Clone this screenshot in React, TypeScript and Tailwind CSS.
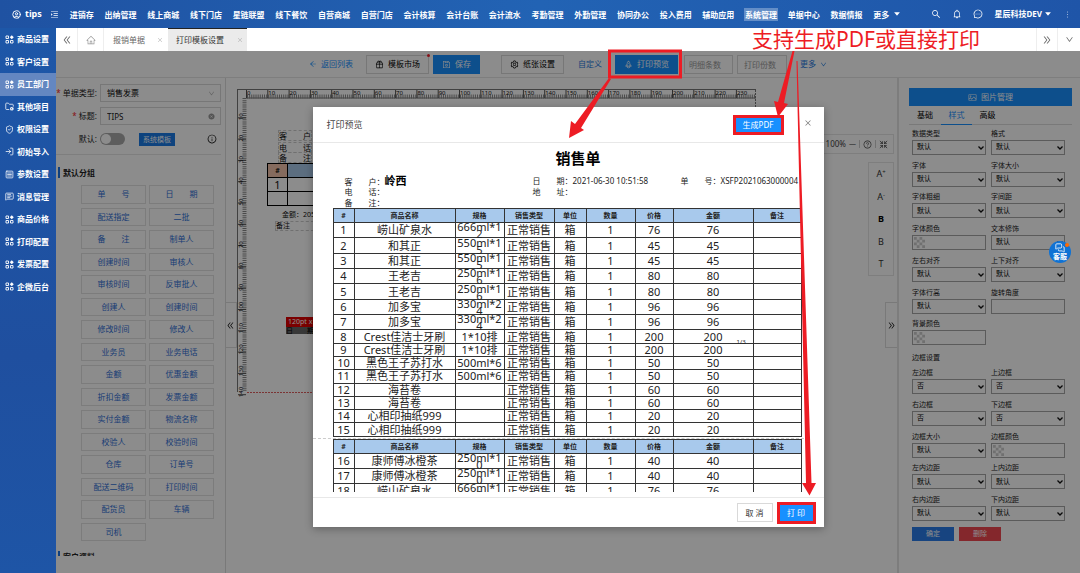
import type { ReactNode } from 'react'
import {
  AiFillCaretDown,
  AiFillCloseCircle,
  AiOutlineArrowLeft,
  AiOutlineBell,
  AiOutlineClose,
  AiOutlineDoubleLeft,
  AiOutlineDoubleRight,
  AiOutlineDown,
  AiOutlineGift,
  AiOutlineHome,
  AiOutlineInfoCircle,
  AiOutlineMenuUnfold,
  AiOutlineMessage,
  AiOutlineMore,
  AiOutlinePicture,
  AiOutlineQuestionCircle,
  AiOutlineRocket,
  AiOutlineSave,
  AiOutlineSearch,
  AiOutlineSetting,
} from 'react-icons/ai'
import { CircleUser, FolderCog, LogIn, MessageSquareText, MessagesSquare, ShieldCheck, Shrink, SquareMenu } from 'lucide-react'

const NAV = [
  '进销存', '出纳管理', '线上商城', '线下门店', '星链联盟', '线下餐饮', '自营商城', '自营门店', '会计核算', '会计台账',
  '会计流水', '考勤管理', '外勤管理', '协同办公', '投入费用', '辅助应用', '系统管理', '单据中心', '数据情报',
]

// three tiles with a diamond in the top right corner
const grid = (
  <svg viewBox="0 0 18 18" className="size-[9px]" fill="none" stroke="currentColor" strokeWidth="1.8">
    <path d="M2 2h5v5H2zM2 11h5v5H2zM11 11h5v5h-5z" />
    <path d="M13.500 .5 17.500 4.500 13.500 8.500 9.500 4.500Z" fill="currentColor" stroke="none" />
  </svg>
)

const SIDEBAR: { label: string; icon: ReactNode }[] = [
  { label: '商品设置', icon: grid },
  { label: '客户设置', icon: grid },
  { label: '员工部门', icon: grid },
  { label: '其他项目', icon: <FolderCog className="size-[9px]" /> },
  { label: '权限设置', icon: <ShieldCheck className="size-[9px]" /> },
  { label: '初始导入', icon: <LogIn className="size-[9px]" /> },
  { label: '参数设置', icon: <SquareMenu className="size-[9px]" /> },
  { label: '消息管理', icon: <MessageSquareText className="size-[9px]" /> },
  { label: '商品价格', icon: grid },
  { label: '打印配置', icon: grid },
  { label: '发票配置', icon: grid },
  { label: '企微后台', icon: grid },
]

const FIELDS = [
  '单　　号', '日　　期', '配送指定', '二批', '备　　注', '制单人', '创建时间', '审核人', '审核时间', '反审批人',
  '创建人', '创建时间', '修改时间', '修改人', '业务员', '业务电话', '金额', '优惠金额', '折扣金额', '发票金额',
  '实付金额', '物流名称', '校验人', '校验时间', '仓库', '订单号', '配送二维码', '打印时间', '配货员', '车辆', '司机',
]

type Prop = { label: string; kind: 'select' | 'color' | 'text'; value?: string }

const STYLE_PROPS: Prop[] = [
  { label: '数据类型', kind: 'select' },
  { label: '格式', kind: 'select' },
  { label: '字体', kind: 'select' },
  { label: '字体大小', kind: 'select' },
  { label: '字体粗细', kind: 'select' },
  { label: '字间距', kind: 'select' },
  { label: '字体颜色', kind: 'color' },
  { label: '文本修饰', kind: 'select' },
  { label: '左右对齐', kind: 'select' },
  { label: '上下对齐', kind: 'select' },
  { label: '字体行高', kind: 'select' },
  { label: '旋转角度', kind: 'text' },
  { label: '背景颜色', kind: 'color' },
]

const BORDER_PROPS: Prop[] = [
  { label: '左边框', kind: 'select', value: '否' },
  { label: '上边框', kind: 'select', value: '否' },
  { label: '右边框', kind: 'select', value: '否' },
  { label: '下边框', kind: 'select', value: '否' },
  { label: '边框大小', kind: 'select' },
  { label: '边框颜色', kind: 'color' },
  { label: '左内边距', kind: 'select' },
  { label: '上内边距', kind: 'select' },
  { label: '右内边距', kind: 'select' },
  { label: '下内边距', kind: 'select' },
]

type Item = [name: string, spec: string, price: number]

const PAGE_ONE: Item[] = [
  ['崂山矿泉水', '666ml*12', 76],
  ['和其正', '550ml*15', 45],
  ['和其正', '550ml*15', 45],
  ['王老吉', '250ml*16', 80],
  ['王老吉', '250ml*16', 80],
  ['加多宝', '330ml*24', 96],
  ['加多宝', '330ml*24', 96],
  ['Crest佳洁士牙刷', '1*10排', 200],
  ['Crest佳洁士牙刷', '1*10排', 200],
  ['黑色王子苏打水', '500ml*6', 50],
  ['黑色王子苏打水', '500ml*6', 50],
  ['海苔卷', '', 60],
  ['海苔卷', '', 60],
  ['心相印抽纸999', '', 20],
  ['心相印抽纸999', '', 20],
]

const PAGE_TWO: Item[] = [
  ['康师傅冰橙茶', '250ml*10', 40],
  ['康师傅冰橙茶', '250ml*10', 40],
  ['崂山矿泉水', '666ml*12', 76],
]

function Header() {
  return (
    <header className="flex h-7 shrink-0 items-center bg-linear-to-r from-[#1f52a2] via-[#2263b4] to-[#1f55a8] pr-2 pl-3 text-[8px] font-bold text-white">
      <CircleUser className="mr-1 size-[9px]" strokeWidth={2.5} />
      <span className="mr-2 text-[9px]">tips</span>
      <AiOutlineMenuUnfold className="mr-[11px] size-[9px]" />
      <nav className="flex flex-1 items-center justify-between leading-[11px]">
        {NAV.map((n) => (
          <a key={n} href="#" className={n === '系统管理' ? 'bg-white/30 outline outline-white/30' : ''}>
            {n}
          </a>
        ))}
        <a href="#" className="flex items-center gap-1">
          更多 <AiFillCaretDown className="size-2" />
        </a>
      </nav>
      <div className="ml-[30px] flex items-center gap-[11px]">
        <AiOutlineSearch className="size-[10px]" />
        <AiOutlineBell className="size-[10px]" />
        <AiOutlineMessage className="size-[10px]" />
        <button className="flex items-center gap-0.5">
          星辰科技DEV <AiFillCaretDown className="size-2" />
        </button>
        <AiOutlineMore className="size-[9px]" />
      </div>
    </header>
  )
}

function Sidebar() {
  return (
    <aside className="w-14 shrink-0 bg-linear-to-b from-[#1d57a8] via-[#1f4f9f] via-60% to-[#1e55a6] text-[8px] font-bold text-white">
      <nav className="grid h-[270px] auto-rows-fr">
        {SIDEBAR.map((s) => (
          <a key={s.label} href="#" className={s.label === '员工部门' ? 'flex items-center gap-[3px] bg-[#6487c1] pl-[5px]' : 'flex items-center gap-[3px] pl-[5px]'}>
            {s.icon}
            {s.label}
          </a>
        ))}
      </nav>
    </aside>
  )
}

function TabBar() {
  return (
    <div className="flex h-[23px] shrink-0 bg-white text-[8px] text-[#666]">
      <button aria-label="向左" className="flex w-[22px] items-center justify-center border-r border-[#eee]">
        <AiOutlineDoubleLeft className="size-[10px]" />
      </button>
      <button aria-label="首页" className="flex w-[26px] items-center justify-center border-r border-[#eee] text-[#999]">
        <AiOutlineHome className="size-[10px]" />
      </button>
      <button className="flex w-16 items-center justify-between pr-[5px] pl-[9px]">
        报销单据 <AiOutlineClose className="size-[6px] text-[#aaa]" />
      </button>
      <button className="flex w-[79px] items-center justify-between border-t border-[#222] bg-[#ebebeb] pr-1 pl-2 text-[#333]">
        打印模板设置 <AiOutlineClose className="size-[6px] text-[#aaa]" />
      </button>
      <div className="flex-1" />
      <button aria-label="向右" className="flex w-[22px] items-center justify-center border-x border-[#eee]">
        <AiOutlineDoubleRight className="size-[10px]" />
      </button>
      <button aria-label="标签列表" className="flex w-[22px] items-center justify-center">
        <AiOutlineDown className="size-[9px]" />
      </button>
    </div>
  )
}

function Toolbar() {
  return (
    <div className="flex h-[27px] shrink-0 items-center justify-center border-b border-[#e6e6e6] text-[8px] text-[#222]">
      <a href="#" className="mr-[13px] flex items-center gap-1 text-[#1890ff]">
        <AiOutlineArrowLeft className="size-2" /> 返回列表
      </a>
      <button className="relative mr-1 flex h-[19px] items-center gap-1 border border-[#d9d9d9] px-2 text-black">
        <AiOutlineGift className="size-[9px]" /> 模板市场
        <span className="absolute -top-0.5 -right-0.5 size-[3px] rounded-full bg-[#f5222d]" />
      </button>
      <button className="mr-[21px] flex h-[19px] items-center gap-1 bg-[#1890ff] px-[9px] text-white">
        <AiOutlineSave className="size-[9px]" /> 保存
      </button>
      <button className="mr-[14px] flex h-[19px] items-center gap-1 border border-[#d9d9d9] px-2 text-black">
        <AiOutlineSetting className="size-[9px]" /> 纸张设置
      </button>
      <a href="#" className="mr-[13px] text-[#1f7ae0]">自定义</a>
      <button className="mr-[6px] flex h-[19px] items-center gap-1 bg-[#1890ff] px-[9px] text-white">
        <AiOutlineRocket className="size-[9px]" /> 打印预览
      </button>
      <input aria-label="明细条数" placeholder="明细条数" className="mr-1 h-[19px] w-[49px] border border-[#d9d9d9] pl-1 placeholder:text-[#999]" />
      <input aria-label="打印份数" placeholder="打印份数" className="mr-[13px] h-[19px] w-[50px] border border-[#d9d9d9] pl-1.5 placeholder:text-[#999]" />
      <button className="flex items-center gap-1 text-[#1f7ae0]">
        更多 <AiOutlineDown className="size-[7px]" />
      </button>
    </div>
  )
}

function GroupTitle({ children }: { children: ReactNode }) {
  return (
    <h3 className="flex items-center gap-[3px] pl-0.5 text-[8px] leading-[11px] font-bold text-[#222]">
      <span className="h-[11px] w-0.5 bg-[#1a73e8]" />
      {children}
    </h3>
  )
}

function FieldPanel() {
  return (
    <div className="w-[170px] shrink-0 border-r border-[#ddd] bg-white pt-[6px] text-[8px] text-[#222]">
      <div className="grid grid-cols-[41px_1fr] items-center gap-x-[3px] gap-y-[5px] pr-1">
        <label htmlFor="doc-type" className="text-right whitespace-nowrap">
          <span className="text-[#f5222d]">*</span> 单据类型:
        </label>
        <div className="relative">
          <select id="doc-type" className="block h-[18px] w-full appearance-none border border-[#d9d9d9] px-1.5 text-black">
            <option>销售发票</option>
          </select>
          <AiOutlineDown className="absolute top-[6px] right-1.5 size-[7px] text-[#aaa]" />
        </div>
        <label htmlFor="doc-title" className="text-right">
          <span className="text-[#f5222d]">*</span> 标题:
        </label>
        <div className="relative">
          <input id="doc-title" defaultValue="TIPS" className="block h-[18px] w-full border border-[#d9d9d9] px-1.5" />
          <AiFillCloseCircle className="absolute top-[6px] right-1.5 size-[7px] text-[#999]" />
        </div>
        <label htmlFor="doc-default" className="text-right">默认:</label>
        <div className="flex h-[18px] items-center">
          <input id="doc-default" type="checkbox" role="switch" className="peer sr-only" />
          <label htmlFor="doc-default" className="flex h-3 w-[25px] items-center rounded-full bg-[#aaa] px-px">
            <span className="size-[10px] rounded-full bg-white" />
          </label>
          <button className="ml-[14px] h-[13px] bg-[#1a7ae6] px-[4px] text-[7px] leading-[13px] text-white">系统模板</button>
          <AiOutlineInfoCircle className="mr-1 ml-auto size-[10px] text-black" />
        </div>
      </div>
      <div className="mt-[6px] mr-1 mb-3 border-t border-[#e6e6e6]" />
      <GroupTitle>默认分组</GroupTitle>
      <div className="mt-[7px] mr-[11px] ml-[25px] grid h-[356px] auto-rows-fr grid-cols-2 gap-x-[3px] gap-y-1">
        {FIELDS.map((f, i) => (
          <button key={i} className="border border-[#e2e2e2] text-[#2f6fd6]">
            {f}
          </button>
        ))}
      </div>
      <div className="mt-[10px] h-[5px] overflow-hidden">
        <GroupTitle>客户资料</GroupTitle>
      </div>
    </div>
  )
}

const STEPS = Array.from({ length: 24 }, (_, i) => i)

function Rulers() {
  return (
    <svg className="absolute top-0 left-0 h-full w-[540px]" stroke="#555" strokeWidth="1">
      {/* tick marks: one per millimetre, long every ten */}
      <path d="M11 11.5H530M20.5 20H530M11.5 12V314" fill="none" stroke="#777" />
      <line x1="21" y1="18.5" x2="530" y2="18.5" strokeWidth="4" strokeDasharray="1 1.13" stroke="#888" />
      <line x1="18.5" y1="20" x2="18.5" y2="314" strokeWidth="4" strokeDasharray="1 1.13" stroke="#888" />
      {STEPS.map((i) => (
        <g key={i}>
          <path d={`M${20.5 + i * 21.3} 12v8`} />
          <text x={21 + i * 21.3} y="17" fontSize="6" fill="#111" stroke="none">{i * 10}</text>
        </g>
      ))}
      {STEPS.slice(1, 15).map((i) => (
        <g key={i}>
          <path d={`M12 ${18.5 + i * 21.3}h8`} />
          <text transform={`translate(17 ${21 + i * 21.3}) rotate(-90)`} fontSize="6" fill="#111" stroke="none">{i * 10}</text>
        </g>
      ))}
      <path d="M21 314.5H530" stroke="#e06060" strokeDasharray="2 1" fill="none" />
      <path d="M529.5 12V314" stroke="#777" strokeDasharray="2 1" fill="none" />
    </svg>
  )
}

function DesignCanvas() {
  return (
    <div className="relative flex-1 overflow-hidden bg-white text-[8px] text-[#111]">
      <Rulers />
      <p className="absolute top-[26px] left-[264px] text-[15px] leading-5 font-bold">销售单</p>
      <p className="absolute top-[52px] left-[52px] border border-dashed border-[#ccc] leading-[9px]">客　　户</p>
      <p className="absolute top-[64px] left-[52px] border border-dashed border-[#ccc] leading-[9px]">电　　话</p>
      <p className="absolute top-[74px] left-[52px] border border-dashed border-[#ccc] leading-[9px]">备　　注</p>
      <table className="absolute top-[85px] left-[41px] w-[470px] border-collapse text-center text-[11px] leading-3">
        <thead>
          <tr className="h-[14px] bg-[#a8c8ea] text-[7px]">
            <th className="w-5 border border-black bg-[#f2c4ab]">#</th>
            <th className="border border-black" />
          </tr>
        </thead>
        <tbody>
          <tr className="h-[14px]">
            <td className="border border-black">1</td>
            <td className="border border-black" />
          </tr>
          <tr className="h-[14px]">
            <td className="border border-black" />
            <td className="border border-black" />
          </tr>
        </tbody>
      </table>
      <p className="absolute top-[132px] left-[56px] text-[7px] leading-[10px]">金额：205</p>
      <p className="absolute top-[143px] left-[49px] w-20 border border-dashed border-[#ccc] text-[7px] leading-[8px]">备注</p>
      <p className="absolute top-[239px] left-[60px] w-20 bg-[#e00000] pl-0.5 text-[7px] leading-[10px] text-white">120pt x</p>
      <p className="absolute top-[249px] left-[60px] w-20 bg-[#666] text-[7px] leading-[7px] text-black">日　　期</p>

      <button aria-label="收起左侧" className="absolute top-[224px] left-0 flex h-[46px] w-[11px] items-center border border-l-0 border-[#ddd] bg-white">
        <AiOutlineDoubleLeft className="size-[9px]" />
      </button>

      <div className="absolute top-14 right-[3px] flex h-5 items-center gap-[3px] border border-[#e6e6e6] pr-[5px] text-[7px] text-[#444]">
        <span>—</span>
        <span className="text-[8px]">100%</span>
        <span>—</span>
        <span className="h-2 border-l border-[#ccc]" />
        <AiOutlineQuestionCircle className="size-[9px]" />
        <span className="h-2 border-l border-[#ccc]" />
        <Shrink className="size-[9px]" />
      </div>
      <div className="absolute top-[84px] right-[3px] grid h-[114px] w-[26px] auto-rows-fr border border-[#e6e6e6] text-[9px] text-[#333]">
        <button>A<sup className="text-[6px]">+</sup></button>
        <button>A<sup className="text-[6px]">-</sup></button>
        <button className="font-bold text-black">B</button>
        <button>B</button>
        <button>T</button>
      </div>
      <button aria-label="收起右侧" className="absolute top-[224px] right-0 flex h-[46px] w-3 items-center justify-center border border-r-0 border-[#ddd]">
        <AiOutlineDoubleRight className="size-[9px]" />
      </button>
    </div>
  )
}

function PropField({ label, kind, value = '默认' }: Prop) {
  return (
    <label className="flex flex-col">
      <span className="leading-3">{label}</span>
      {kind === 'select' && (
        <span className="relative">
          <select className="block h-[15px] w-full appearance-none border border-[#a6a6a6] pl-1 text-[7px] text-black">
            <option>{value}</option>
          </select>
          <svg viewBox="0 0 6 4" className="absolute top-[6px] right-[2px] h-1 w-1.5" fill="none" stroke="#111" strokeWidth="1.3">
            <path d="M.5 .5 3 3 5.500 .5" />
          </svg>
        </span>
      )}
      {kind === 'text' && <input className="block h-[15px] w-full border border-[#a6a6a6] px-1" />}
      {kind === 'color' && (
        <span className="block h-[15px] border border-[#a6a6a6]">
          <svg viewBox="0 0 12 12" className="m-px size-[11px]" fill="#ccc">
            <path d="M0 0h3v3H0zM6 0h3v3H6zM3 3h3v3H3zM9 3h3v3H9zM0 6h3v3H0zM6 6h3v3H6zM3 9h3v3H3zM9 9h3v3H9z" />
          </svg>
          <input aria-label={label} type="color" className="sr-only" />
        </span>
      )}
    </label>
  )
}

function StylePanel() {
  return (
    <div className="w-[183px] shrink-0 border-l-2 border-[#e4e4e4] bg-white pt-[10px] pr-2 pl-[10px] text-[7px] text-[#222]">
      <button className="flex h-[18px] w-full items-center justify-center gap-1 bg-[#1890ff] text-[8px] text-white">
        <AiOutlinePicture className="size-[9px]" /> 图片管理
      </button>
      <div role="tablist" className="flex h-[19px] border-b border-[#ddd] text-[8px]">
        <button role="tab" className="w-8 text-black">基础</button>
        <button role="tab" aria-selected="true" className="-mb-px w-[31px] border-b border-[#1890ff] text-[#1890ff]">样式</button>
        <button role="tab" className="w-[31px] text-black">高级</button>
      </div>
      <div className="pt-[3px] pr-[7px] pl-[3px]">
        <div className="grid h-[222px] auto-rows-fr grid-cols-2 gap-x-[5px]">
          {STYLE_PROPS.map((p) => (
            <PropField key={p.label} {...p} />
          ))}
        </div>
        <p className="flex h-[17px] items-center">边框设置</p>
        <div className="grid h-[159px] auto-rows-fr grid-cols-2 gap-x-[5px]">
          {BORDER_PROPS.map((p) => (
            <PropField key={p.label} {...p} />
          ))}
        </div>
        <div className="mt-px flex gap-[5px] text-white">
          <button className="h-[14px] w-[42px] bg-[#2b7de9]">确定</button>
          <button className="h-[14px] w-[42px] bg-[#f04850]">删除</button>
        </div>
      </div>
    </div>
  )
}

const COLUMNS = ['#', '商品名称', '规格', '销售类型', '单位', '数量', '价格', '金额', '备注']

function OrderTable({ items, start, className }: { items: Item[]; start: number; className: string }) {
  const cell = 'border border-[#333] p-0'
  return (
    <table className={`w-[468px] table-fixed border-collapse text-center text-[11px] leading-[12px] text-[#222] ${className}`}>
      <colgroup>
        <col className="w-[21px]" />
        <col className="w-[101px]" />
        <col className="w-[49px]" />
        <col className="w-[50px]" />
        <col className="w-[32px]" />
        <col className="w-[49px]" />
        <col className="w-[38px]" />
        <col className="w-[80px]" />
        <col className="w-[48px]" />
      </colgroup>
      <thead>
        <tr className="h-[14px] bg-[#a8c9ec] text-[7px]">
          {COLUMNS.map((c) => (
            <th key={c} className={cell}>{c}</th>
          ))}
        </tr>
      </thead>
      <tbody>
        {items.map(([name, spec, price], i) => (
          <tr key={i} className={spec.length > 7 ? 'h-[15px]' : 'h-[13px]'}>
            <td className={cell}>{start + i}</td>
            <td className={cell}>{name}</td>
            <td className={spec.length > 7 ? `${cell} leading-[7px] break-all` : cell}>{spec}</td>
            <td className={cell}>正常销售</td>
            <td className={cell}>箱</td>
            <td className={cell}>1</td>
            <td className={cell}>{price}</td>
            <td className={cell}>{price}</td>
            <td className={cell} />
          </tr>
        ))}
      </tbody>
    </table>
  )
}

function PrintPreview() {
  return (
    <div role="dialog" aria-label="打印预览" className="flex h-[420px] w-[511px] flex-col bg-white shadow-[0_2px_8px_rgba(0,0,0,0.3)]">
      <div className="flex h-9 shrink-0 items-center border-b border-[#e8e8e8] pr-3 pl-[14px]">
        <h2 className="flex-1 text-[9px] text-[#444]">打印预览</h2>
        <button className="mr-5 h-5 w-[51px] border-3 border-[#ed1c24] bg-[#1890ff] text-[8px] leading-[14px] text-white">生成PDF</button>
        <button aria-label="关闭" className="mb-1 text-[#777]">
          <AiOutlineClose className="size-2" />
        </button>
      </div>
      <div className="relative mb-[5px] min-h-0 flex-1 overflow-hidden px-5 text-[8px] text-[#222]">
        <h1 className="mt-[5px] ml-[20px] text-center text-[15px] leading-5 font-bold text-black">销售单</h1>
        <div className="mt-[7px] grid auto-rows-[11px] grid-cols-[188px_148px_1fr] pl-3 leading-[11px] whitespace-nowrap">
          <p>客　　户：<b className="text-[11px] leading-[11px] text-black">岭西</b></p>
          <p>日　　期：2021-06-30 10:51:58</p>
          <p>单　　号：XSFP2021063000004</p>
          <p>电　　话：</p>
          <p className="col-span-2">地　　址：</p>
          <p>备　　注：</p>
        </div>
        <OrderTable items={PAGE_ONE} start={1} className="h-[229px]" />
        <span className="absolute top-[193px] left-[424px] text-[6px] leading-3">1/3</span>
        <div className="-ml-5 mt-px border-t border-dashed border-[#ccc]" />
        <OrderTable items={PAGE_TWO} start={16} className="" />
      </div>
      <div className="flex h-[30px] shrink-0 items-center justify-end gap-1 border-t border-[#e8e8e8] pr-2 text-[8px]">
        <button className="h-[19px] w-9 border border-[#d9d9d9] text-[#333]">取 消</button>
        <button className="h-[22px] w-[39px] border-3 border-[#ed1c24] bg-[#1890ff] leading-4 text-white">打 印</button>
      </div>
    </div>
  )
}

function Annotations() {
  return (
    <div className="pointer-events-none absolute inset-0">
      <svg className="absolute inset-0 size-full" fill="#ed1c24">
        <rect x="609.5" y="51" width="71" height="26" fill="none" stroke="#ed1c24" strokeWidth="3" />
        <path d="M609 78 611 79 581 128 584 130 569 138 571 121 575 124Z" />
        <path d="M792.500 51H794.500L784 103 788 104 778 117 774 101 778 102Z" />
        <path d="M796.500 61H797.500L811.500 483H816L809.500 495.500 802 483H806Z" />
      </svg>
      <p className="absolute top-7 left-[752px] text-[21px] leading-[23px] whitespace-nowrap text-[#ed1c24]">支持生成PDF或直接打印</p>
    </div>
  )
}

export default function App() {
  return (
    <div className="relative flex h-screen flex-col overflow-hidden bg-white font-['Noto_Sans','Noto_Sans_CJK_SC',sans-serif]">
      <Header />
      <div className="flex min-h-0 flex-1">
        <Sidebar />
        <main className="flex min-w-0 flex-1 flex-col">
          <TabBar />
          <div className="relative flex min-h-0 flex-1 flex-col">
            <Toolbar />
            <div className="flex min-h-0 flex-1">
              <FieldPanel />
              <DesignCanvas />
              <StylePanel />
            </div>
            <div className="absolute inset-0 flex items-start justify-center bg-black/45 pt-14">
              <PrintPreview />
            </div>
            <button className="absolute top-[190px] right-[9px] flex size-[22px] flex-col items-center justify-center rounded-full bg-[#0f72d4] text-[7px] leading-2 font-bold text-white">
              <MessagesSquare className="size-[10px]" />
              客服
              <span className="absolute top-0.5 right-0.5 size-1 rounded-full bg-[#ff6a00]" />
            </button>
          </div>
        </main>
      </div>
      <Annotations />
    </div>
  )
}
